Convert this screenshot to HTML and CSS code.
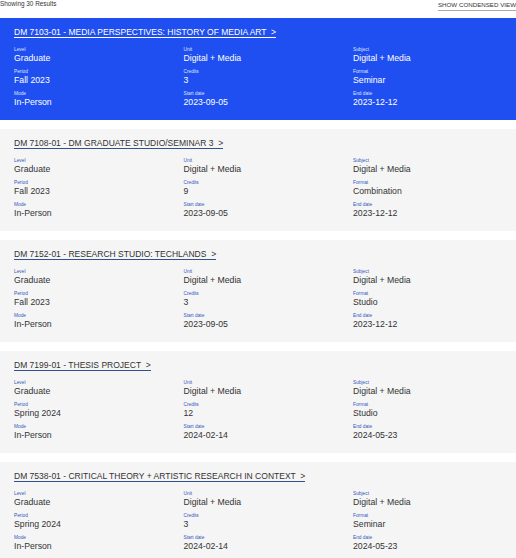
FILE: index.html
```html
<!DOCTYPE html>
<html lang="en">
<head>
<meta charset="utf-8">
<title>Course results</title>
<link rel="stylesheet" href="styles.css">
</head>
<body>
<header class="top">
  <span class="count">Showing 30 Results</span>
  <a class="toggle">SHOW CONDENSED VIEW</a>
</header>
<main class="list">
  <article class="card active">
    <h2 class="title"><a>DM 7103-01 - MEDIA PERSPECTIVES: HISTORY OF MEDIA ART &nbsp;&gt;</a></h2>
    <dl class="grid">
      <div><dt>Level</dt><dd>Graduate</dd></div><div><dt>Unit</dt><dd>Digital + Media</dd></div><div><dt>Subject</dt><dd>Digital + Media</dd></div>
      <div><dt>Period</dt><dd>Fall 2023</dd></div><div><dt>Credits</dt><dd>3</dd></div><div><dt>Format</dt><dd>Seminar</dd></div>
      <div><dt>Mode</dt><dd>In-Person</dd></div><div><dt>Start date</dt><dd>2023-09-05</dd></div><div><dt>End date</dt><dd>2023-12-12</dd></div>
    </dl>
  </article>
  <article class="card">
    <h2 class="title"><a>DM 7108-01 - DM GRADUATE STUDIO/SEMINAR 3 &nbsp;&gt;</a></h2>
    <dl class="grid">
      <div><dt>Level</dt><dd>Graduate</dd></div><div><dt>Unit</dt><dd>Digital + Media</dd></div><div><dt>Subject</dt><dd>Digital + Media</dd></div>
      <div><dt>Period</dt><dd>Fall 2023</dd></div><div><dt>Credits</dt><dd>9</dd></div><div><dt>Format</dt><dd>Combination</dd></div>
      <div><dt>Mode</dt><dd>In-Person</dd></div><div><dt>Start date</dt><dd>2023-09-05</dd></div><div><dt>End date</dt><dd>2023-12-12</dd></div>
    </dl>
  </article>
  <article class="card">
    <h2 class="title"><a>DM 7152-01 - RESEARCH STUDIO: TECHLANDS &nbsp;&gt;</a></h2>
    <dl class="grid">
      <div><dt>Level</dt><dd>Graduate</dd></div><div><dt>Unit</dt><dd>Digital + Media</dd></div><div><dt>Subject</dt><dd>Digital + Media</dd></div>
      <div><dt>Period</dt><dd>Fall 2023</dd></div><div><dt>Credits</dt><dd>3</dd></div><div><dt>Format</dt><dd>Studio</dd></div>
      <div><dt>Mode</dt><dd>In-Person</dd></div><div><dt>Start date</dt><dd>2023-09-05</dd></div><div><dt>End date</dt><dd>2023-12-12</dd></div>
    </dl>
  </article>
  <article class="card">
    <h2 class="title"><a>DM 7199-01 - THESIS PROJECT &nbsp;&gt;</a></h2>
    <dl class="grid">
      <div><dt>Level</dt><dd>Graduate</dd></div><div><dt>Unit</dt><dd>Digital + Media</dd></div><div><dt>Subject</dt><dd>Digital + Media</dd></div>
      <div><dt>Period</dt><dd>Spring 2024</dd></div><div><dt>Credits</dt><dd>12</dd></div><div><dt>Format</dt><dd>Studio</dd></div>
      <div><dt>Mode</dt><dd>In-Person</dd></div><div><dt>Start date</dt><dd>2024-02-14</dd></div><div><dt>End date</dt><dd>2024-05-23</dd></div>
    </dl>
  </article>
  <article class="card">
    <h2 class="title"><a>DM 7538-01 - CRITICAL THEORY + ARTISTIC RESEARCH IN CONTEXT &nbsp;&gt;</a></h2>
    <dl class="grid">
      <div><dt>Level</dt><dd>Graduate</dd></div><div><dt>Unit</dt><dd>Digital + Media</dd></div><div><dt>Subject</dt><dd>Digital + Media</dd></div>
      <div><dt>Period</dt><dd>Spring 2024</dd></div><div><dt>Credits</dt><dd>3</dd></div><div><dt>Format</dt><dd>Seminar</dd></div>
      <div><dt>Mode</dt><dd>In-Person</dd></div><div><dt>Start date</dt><dd>2024-02-14</dd></div><div><dt>End date</dt><dd>2024-05-23</dd></div>
    </dl>
  </article>
</main>
</body>
</html>
```
FILE: styles.css
```css
* { box-sizing: border-box; }
html, body { margin: 0; padding: 0; height: 558px; overflow: hidden; background: #fff; }
body { font-family: "Liberation Sans", Arial, sans-serif; color: #333; }
.top {
  display: flex; justify-content: space-between; align-items: flex-start;
  height: 18px;
}
.count { font-size: 6.4px; line-height: 8px; color: #333; }
.toggle {
  font-size: 6.2px; line-height: 8px; color: #333;
  border-bottom: 1px solid #a9a9ad; padding-bottom: 1px; margin-top: 1px;
}
.list { display: flex; flex-direction: column; gap: 9px; }
.card { background: #f5f5f5; height: 102px; padding: 10px 14px 0; flex: none; }
.card.active { background: #1f4ff0; color: #fff; }
.title { margin: 0 0 9px; font-size: 8.53px; line-height: 9px; font-weight: 400; }
.title a { display: inline-block; border-bottom: 1px solid #33518f; }
.active .title a { border-bottom-color: #fff; }
.grid {
  margin: 0; display: grid; grid-template-columns: 169.5px 169.5px 1fr; row-gap: 5px;
}
.grid dt { font-size: 4.8px; line-height: 5px; color: #3355bb; }
.active .grid dt { color: #dfe6ff; }
.grid dd { margin: 0; font-size: 8.7px; line-height: 12px; }
```
